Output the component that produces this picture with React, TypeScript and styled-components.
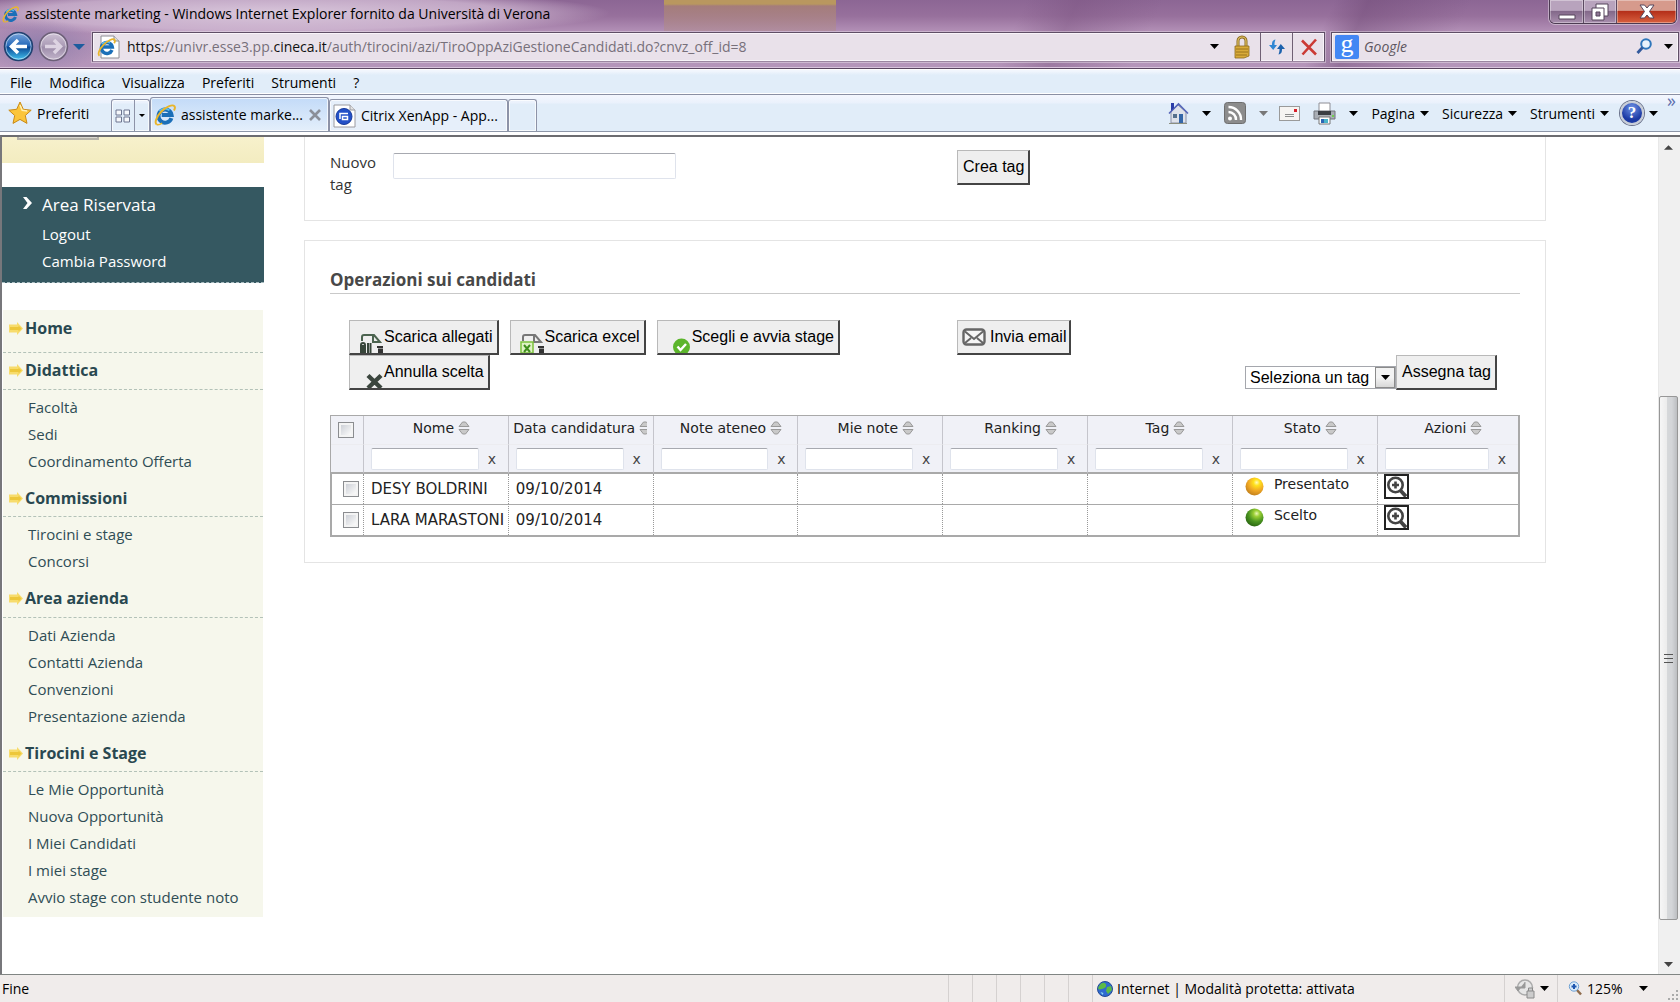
import React from "react";
import styled, { createGlobalStyle, css } from "styled-components";

const ui = `"Open Sans", "Noto Sans", sans-serif`;
const web = `"Open Sans", "Noto Sans", sans-serif`;
const grid = `"DejaVu Sans", sans-serif`;
const form = `"Liberation Sans", Arial, sans-serif`;

const GlobalStyle = createGlobalStyle`
  * { box-sizing: border-box; }
  body { margin: 0; background: #fff; font-family: ${ui}; font-size: 14px; color: #000; }
  button, input, select { font: inherit; color: inherit; margin: 0; }
  a { color: inherit; text-decoration: none; }
  svg { display: block; flex: none; }
`;

const Window = styled.div`
  display: flex;
  flex-direction: column;
  height: 100vh;
  overflow: hidden;
`;

/* ---------- glass frame ---------- */

const Glass = styled.header`
  border-bottom: 1px solid #5a4560;
  box-shadow: inset 0 -1px 0 #d9c3dc;
  background:
    radial-gradient(ellipse 60px 26px at 40px 46px, rgba(120, 115, 165, 0.6), transparent 100%),
    radial-gradient(ellipse 340px 24px at 270px 13px, rgba(224, 208, 226, 0.9), rgba(214, 192, 216, 0.7) 70%, transparent 100%),
    linear-gradient(180deg, #b9975f 0 4px, rgba(168, 128, 118, 0.85) 6px, rgba(176, 140, 150, 0.7) 31px) 664px 0 / 172px 31px no-repeat,
    linear-gradient(115deg, transparent 60%, rgba(120, 80, 125, 0.4) 63%, transparent 68%, transparent 78%, rgba(110, 72, 116, 0.45) 80%, transparent 86%),
    linear-gradient(180deg, #8c6694 0, #97709c 16px, #b08db4 30px, #b596ba 68px);
`;

const TitleBar = styled.div`
  display: flex;
  justify-content: space-between;
  height: 31px;
  padding: 0 3px 0 2px;
`;

const Title = styled.h1`
  display: flex;
  align-items: center;
  gap: 6px;
  height: 28px;
  margin: 0;
  font-size: 14px;
  line-height: 20px;
  font-weight: 400;
`;

const WindowControls = styled.div`
  display: flex;
  height: 24px;
  border: 1px solid #4c3b52;
  border-top: 0;
  border-radius: 0 0 6px 6px;
  overflow: hidden;
  box-shadow: 0 0 0 1px rgba(255, 255, 255, 0.4);
`;

const WindowButton = styled.button<{ $close?: boolean }>`
  display: flex;
  align-items: center;
  justify-content: center;
  width: ${(p) => (p.$close ? 60 : 33)}px;
  padding: 0;
  border: 0;
  border-left: 1px solid #5c4a62;
  background: ${(p) =>
    p.$close
      ? "linear-gradient(#d69a8c 0 45%, #b5301a 50%, #d8603f 100%)"
      : "linear-gradient(#b8a3bd 0 45%, #83698a 50%, #a98fae 100%)"};
  box-shadow: inset 0 0 0 1px rgba(255, 255, 255, 0.35);
  &:first-child { border-left: 0; }
`;

const NavRow = styled.div`
  display: flex;
  align-items: center;
  height: 37px;
  padding: 0 1px 6px 3px;
  gap: 6px;
`;

const NavButtons = styled.div`
  display: flex;
  align-items: center;
  gap: 4px;
  width: 83px;
  height: 30px;
`;

const BareButton = styled.button`
  display: flex;
  align-items: center;
  gap: 5px;
  padding: 0;
  border: 0;
  background: none;
  white-space: nowrap;
`;

const Field = styled.div`
  display: flex;
  align-items: center;
  height: 30px;
  border: 1px solid #5f4e66;
  border-bottom-color: #9b86a0;
  box-shadow: inset 0 0 0 1px #f9f4f9, 0 0 0 1px rgba(255, 255, 255, 0.35);
  background: #e9e1ea;
`;

const AddressField = styled(Field)`
  flex: 1;
  padding-left: 4px;
`;

const Url = styled.div`
  flex: 1;
  margin-left: 6px;
  line-height: 20px;
  color: #77707a;
  outline: 0;
  b { font-weight: 400; color: #111; }
`;

const FieldButton = styled.button<{ $rule?: boolean; $w: number }>`
  display: flex;
  align-items: center;
  justify-content: center;
  width: ${(p) => p.$w}px;
  height: 28px;
  padding: 0;
  border: 0;
  border-left: ${(p) => (p.$rule ? "1px solid #6f6074" : "0")};
  background: none;
`;

const SearchField = styled(Field)`
  width: 348px;
  padding-left: 3px;
`;

const GoogleMark = styled.span`
  width: 24px;
  height: 24px;
  border-radius: 2px;
  background: #4387f4;
  color: #fff;
  font: 26px/18px "Liberation Serif", serif;
  text-align: center;
`;

const SearchInput = styled.input`
  flex: 1;
  min-width: 0;
  padding: 0 5px;
  border: 0;
  outline: 0;
  background: none;
  &::placeholder { color: #5d5660; font-style: italic; opacity: 1; }
`;

/* ---------- bars ---------- */

const MenuBar = styled.nav`
  display: flex;
  align-items: center;
  gap: 17px;
  height: 26px;
  padding: 2px 10px 0;
  border-bottom: 1px solid #8a8fa3;
  box-shadow: inset 0 1px 0 #fff, inset 0 -1px 0 #fff;
  background: linear-gradient(#f2f6fd 0 2px, #e1edf9 6px);
`;

const CommandBar = styled.div`
  display: flex;
  justify-content: space-between;
  align-items: stretch;
  height: 37px;
  border-bottom: 1px solid #8d96a8;
  background: linear-gradient(#f4f7fe 0, #eaf1fc 8px, #e1edf9 9px);
`;

const Side = styled.div`
  display: flex;
  align-items: flex-end;
`;

const Favorites = styled(BareButton)`
  align-self: center;
  width: 103px;
  margin-left: 8px;
`;

const tabFace = css`
  border: 1px solid #8d93a8;
  border-bottom: 0;
  border-radius: 3px 3px 0 0;
  box-shadow: inset 0 0 0 1px rgba(255, 255, 255, 0.7);
`;

const QuickTabs = styled.div`
  ${tabFace}
  display: flex;
  width: 39px;
  height: 32px;
`;

const QuickButton = styled.button<{ $w: number }>`
  display: flex;
  align-items: center;
  justify-content: center;
  width: ${(p) => p.$w}px;
  padding: 0;
  border: 0;
  background: none;
  & + & { border-left: 1px solid #8d93a8; }
`;

const Tab = styled.div<{ $active?: boolean }>`
  ${tabFace}
  display: flex;
  align-items: center;
  justify-content: space-between;
  width: 179px;
  height: ${(p) => (p.$active ? 34 : 32)}px;
  padding: 0 7px 0 3px;
  background: ${(p) => (p.$active ? "linear-gradient(#c3dbf8, #e4effb)" : "#e6effa")};
`;

const NewTab = styled.button`
  ${tabFace}
  width: 29px;
  height: 32px;
  padding: 0;
  background: none;
`;

const Commands = styled.div`
  display: flex;
  align-items: center;
  padding-right: 4px;
`;

const Command = styled(BareButton)<{ $gap: number }>`
  margin-right: ${(p) => p.$gap}px;
`;

const HelpMark = styled.span`
  width: 24px;
  height: 24px;
  border: 2px solid #c9ced8;
  border-radius: 50%;
  box-shadow: 0 0 0 1px #69718a;
  background: radial-gradient(circle at 50% 25%, #6f93e6, #1c3aa4 65%);
  color: #fff;
  font: 700 17px/20px "Liberation Serif", serif;
  text-align: center;
`;

const Chevrons = styled.span`
  align-self: flex-start;
  width: 18px;
  text-align: right;
  color: #5d6fae;
  font-size: 18px;
  line-height: 10px;
`;

/* ---------- viewport ---------- */

const Viewport = styled.div`
  display: flex;
  flex: 1;
  min-height: 0;
  margin-top: 3px;
  border-top: 2px solid #6c6c70;
  border-left: 2px solid #77777b;
  overflow: hidden;
`;

const Page = styled.div`
  display: flex;
  align-items: flex-start;
  flex: 1;
  gap: 40px;
  padding-right: 112px;
  overflow: hidden;
  font-family: ${web};
`;

const Sidebar = styled.aside`
  width: 262px;
  flex: none;
`;

const YellowBox = styled.div`
  height: 26px;
  padding-left: 15px;
  background: linear-gradient(#f7f1cc, #f3ecc0);
`;

const CutButton = styled.div`
  width: 82px;
  height: 3px;
  border: 2px solid #b5b3aa;
  border-top: 0;
  background: #dcdad2;
`;

const Reserved = styled.section`
  margin: 24px 0 27px;
  padding: 4px 0 7px 20px;
  border-bottom: 1px dashed #a9bcc0;
  background: #355861;
  color: #fff;
`;

const ReservedTitle = styled.h2`
  display: flex;
  align-items: center;
  gap: 9px;
  margin: 0 0 3px;
  font-size: 17px;
  line-height: 27px;
  font-weight: 400;
`;

const List = styled.ul<{ $indent: number }>`
  margin: 0;
  padding: 0 0 0 ${(p) => p.$indent}px;
  list-style: none;
  font-size: 15px;
  line-height: 27px;
`;

const Menu = styled.nav`
  margin: 0 1px;
  padding-bottom: 6px;
  background: #f6f7ec;
  color: #2f4d55;
`;

const MenuHeading = styled.h2<{ $top: number; $bottom: number }>`
  display: flex;
  align-items: center;
  gap: 2px;
  margin: 0 0 4px;
  padding: ${(p) => p.$top}px 0 ${(p) => p.$bottom}px 6px;
  border-bottom: 1px dashed #b3c2b8;
  font-size: 16px;
  line-height: 27px;
  font-weight: 700;
  color: #294850;
  &:first-child { margin-bottom: 0; }
`;

const Main = styled.main`
  flex: 1;
  min-width: 0;
`;

const Panel = styled.section`
  padding: 0 25px 25px;
  border: 1px solid #e4e4e4;
  & + & { margin-top: 19px; padding-top: 25px; }
  &:first-child { border-top: 0; padding-top: 13px; }
`;

const Halves = styled.div`
  display: grid;
  grid-template-columns: 627fr 563fr;
`;

const NewTag = styled.div`
  display: flex;
  align-items: flex-start;
  padding-top: 1px;
`;

const NewTagLabel = styled.label`
  width: 63px;
  padding-right: 16px;
  font-size: 15px;
  line-height: 22px;
  color: #333;
`;

const inputFace = css`
  border: 1px solid #dfe3ec;
  border-top-color: #a7a9b0;
  border-radius: 2px;
  background: #fff;
  outline: 0;
`;

const NewTagInput = styled.input`
  ${inputFace}
  width: 283px;
  height: 26px;
  margin-top: 2px;
  padding: 0 5px;
`;

const PanelTitle = styled.h2`
  margin: 0 0 26px;
  border-bottom: 1px solid #c9c9c9;
  font-size: 17px;
  line-height: 27px;
  font-weight: 700;
  color: #484848;
`;

const FormButton = styled.button`
  display: flex;
  align-items: center;
  height: 35px;
  padding: 0 4px 0 5px;
  border: 2px solid #444;
  border-top: 1px solid #b9b9b9;
  border-left: 1px solid #b9b9b9;
  background: #efefef;
  font-family: ${form};
  font-size: 16px;
  white-space: nowrap;
  svg { align-self: flex-end; }
`;

const MailButton = styled(FormButton)`
  gap: 4px;
  padding: 0 3px 0 4px;
  svg { align-self: center; }
`;

const LeftOps = styled.div`
  display: flex;
  flex-wrap: wrap;
  align-content: flex-start;
  column-gap: 11px;
  padding-left: 19px;
`;

const RightOps = styled.div`
  display: flex;
  flex-direction: column;
  align-items: flex-start;
`;

const AssignRow = styled.div`
  display: flex;
  align-items: flex-end;
  align-self: flex-end;
  margin-right: 23px;
`;

const SelectBox = styled.div`
  position: relative;
  margin-bottom: 1px;
`;

const TagSelect = styled.select`
  appearance: none;
  display: block;
  width: 151px;
  height: 23px;
  padding: 0 22px 0 4px;
  border: 1px solid #a5a7ad;
  border-radius: 0;
  background: #fff;
  font-family: ${form};
  font-size: 16px;
`;

const SelectArrow = styled.span`
  position: absolute;
  top: 1px;
  right: 1px;
  display: flex;
  align-items: center;
  justify-content: center;
  width: 20px;
  height: 21px;
  border: 1px solid #8b8b8b;
  background: linear-gradient(#f3f3f3 50%, #d8d8d8);
  pointer-events: none;
`;

/* ---------- table ---------- */

const Table = styled.table`
  table-layout: fixed;
  width: 100%;
  margin-top: 25px;
  border-collapse: separate;
  border-spacing: 0;
  border: 1px solid #a9a9a9;
  border-right-width: 2px;
  border-bottom-width: 2px;
  font-family: ${grid};
  font-size: 14px;
  color: #222;
`;

const CheckCol = styled.col`
  width: 32px;
`;

const DataCol = styled.col`
  width: 12.2%;
  &:last-child { width: auto; }
`;

const Th = styled.th`
  height: 29px;
  padding: 0 0 4px;
  border-left: 1px solid #c5c5cc;
  border-bottom: 1px solid #ececf0;
  background: #f0f1f7;
  font-weight: 400;
  &:first-child { border-left: 0; }
`;

const HeadLabel = styled.div`
  display: flex;
  align-items: center;
  justify-content: center;
  gap: 4px;
  margin: 0 6px 0 5px;
  overflow: hidden;
  white-space: nowrap;
  &::before { content: ""; flex: 0 1 8px; }
`;

const FilterTh = styled(Th)`
  height: 29px;
  padding: 0 7px;
  border-bottom: 2px solid #a9a9a9;
`;

const FilterBox = styled.div`
  display: flex;
  align-items: center;
  gap: 6px;
`;

const FilterInput = styled.input`
  ${inputFace}
  flex: 1;
  min-width: 0;
  height: 22px;
  padding: 0 3px;
`;

const ClearButton = styled.button`
  width: 16px;
  height: 22px;
  padding: 0 4px 0 2px;
  border: 0;
  background: none;
  color: #444;
  line-height: 20px;
`;

const Td = styled.td<{ $top?: boolean }>`
  height: 30px;
  padding: 0 7px;
  border-left: 1px dotted #999;
  font-size: ${(p) => (p.$top ? 14 : 15)}px;
  vertical-align: ${(p) => (p.$top ? "top" : "middle")};
  white-space: nowrap;
  &:first-child { border-left: 1px solid #a9a9a9; padding: 0 0 0 11px; }
  tr + tr & { height: 31px; border-top: 1px solid #a9a9a9; }
`;

const Check = styled.input`
  appearance: none;
  display: block;
  width: 16px;
  height: 16px;
  border: 1px solid #8b8d90;
  background: linear-gradient(135deg, #c4c8d0, #f8f8f8 80%);
  box-shadow: inset 0 0 0 2px #f4f4f4;
`;

const HeadCheck = styled(Check)`
  margin: 4px 0 0 7px;
`;

const State = styled.div`
  display: flex;
  gap: 10px;
  padding-left: 5px;
  line-height: 20px;
  svg { margin-top: 3px; }
`;

const ZoomLink = styled.a`
  display: block;
  width: 25px;
  height: 25px;
  margin-left: -1px;
  border: 2px solid #222;
`;

/* ---------- scrollbar ---------- */

const ScrollBar = styled.div`
  display: flex;
  flex-direction: column;
  width: 22px;
  flex: none;
  padding-right: 2px;
  border-left: 1px solid #e8e8e8;
  background: #f0f0f0;
`;

const ScrollArrow = styled.button`
  display: flex;
  align-items: center;
  justify-content: center;
  height: 20px;
  padding: 0;
  border: 0;
  background: none;
`;

const Track = styled.div<{ $share: number }>`
  flex: ${(p) => p.$share};
`;

const Thumb = styled.div`
  display: flex;
  flex: 523;
  align-items: center;
  justify-content: center;
  border: 1px solid #979797;
  border-radius: 2px;
  background: linear-gradient(90deg, #f6f6f6, #ececec 40%, #d6d8da 41%, #d3d5d8 70%, #bcbec1);
`;

/* ---------- status ---------- */

const StatusBar = styled.footer`
  display: flex;
  align-items: stretch;
  height: 28px;
  flex: none;
  padding-left: 2px;
  border-top: 1px solid #808583;
  background: #f0eceb;
  line-height: 27px;
`;

const StatusText = styled.div`
  flex: 1;
`;

const Cell = styled.div<{ $w: number }>`
  display: flex;
  align-items: center;
  gap: 4px;
  width: ${(p) => p.$w}px;
  padding-left: 4px;
  border-left: 1px solid #d5d1d0;
  white-space: nowrap;
`;

const ToolCell = styled(Cell)`
  padding-left: 10px;
  gap: 16px;
`;

/* ---------- icons ---------- */

const Caret = ({ color = "#000", w = 9 }: { color?: string; w?: number }) => (
  <svg width={w} height={Math.ceil(w / 2)} viewBox="0 0 10 5" preserveAspectRatio="none">
    <path d="M0 0h10L5 5z" fill={color} />
  </svg>
);

const IELogo = ({ size = 20 }: { size?: number }) => (
  <svg width={size} height={size} viewBox="0 0 20 20">
    <path d="M15.8 12.9A6 6 0 1 1 16 10H7" fill="none" stroke="#1b6fb8" strokeWidth="3.6" />
    <path d="M5 6.6a6 6 0 0 1 9-.8" fill="none" stroke="#59bdec" strokeWidth="1.6" />
    <path d="M2.6 18.6C.4 17.6 1.6 12 6.5 7 11.5 2 17 .2 18.5 1.9c.8 1 .5 2.6-.4 4.1" fill="none" stroke="#e9b52b" strokeWidth="1.8" />
    <path d="M2.6 18.6c1.2.5 3-.1 4.8-1.3" fill="none" stroke="#e9b52b" strokeWidth="1.4" />
  </svg>
);

const PageIE = () => (
  <svg width="24" height="24" viewBox="0 0 24 24">
    <path d="M4 1h13l5 5v17H4z" fill="#fff" stroke="#8e8e95" />
    <path d="M17 1v5h5" fill="#ddd" stroke="#8e8e95" />
    <path d="M15 15a5.5 5.5 0 1 1 .3-3H6" fill="none" stroke="#1b6fb8" strokeWidth="3.4" />
    <path d="M5 9a6 6 0 0 1 8-1" fill="none" stroke="#59bdec" strokeWidth="1.4" />
    <path d="M2.5 20.8c-2-1.500-.5-6.500 4-11s9.500-6.600 11-5c.6.8.4 2.200-.3 3.400" fill="none" stroke="#e9b52b" strokeWidth="1.8" />
  </svg>
);

const CitrixIcon = () => (
  <svg width="23" height="24" viewBox="0 0 23 24">
    <path d="M1 1h16l5 5v17H1z" fill="#fff" stroke="#9a9aa0" />
    <path d="M17 1v5h5" fill="#e2e2e2" stroke="#9a9aa0" />
    <circle cx="11" cy="12.5" r="8" fill="#2350c8" stroke="#173a9b" />
    <path d="M7 15V9.500h8M9.500 12.500h5v3h-5z" fill="none" stroke="#fff" strokeWidth="1.5" />
  </svg>
);

const NavOrb = ({ forward }: { forward?: boolean }) => (
  <svg width="31" height="31" viewBox="0 0 31 31">
    <defs>
      <linearGradient id={forward ? "orbF" : "orbB"} x1="0" y1="0" x2="0" y2="1">
        <stop offset="0" stopColor={forward ? "#cfc3d6" : "#7ba6dc"} />
        <stop offset=".48" stopColor={forward ? "#aa9bb5" : "#2468b8"} />
        <stop offset=".52" stopColor={forward ? "#9c8ca9" : "#0b4692"} />
        <stop offset="1" stopColor={forward ? "#c4b6cc" : "#44c8f5"} />
      </linearGradient>
    </defs>
    <circle cx="15.5" cy="15.5" r="14" fill={`url(#${forward ? "orbF" : "orbB"})`} stroke={forward ? "#6d6078" : "#23416f"} strokeWidth="1.5" />
    <circle cx="15.5" cy="15.5" r="12.6" fill="none" stroke="#fff" strokeOpacity=".5" />
    <path
      d={forward ? "M7 15.500h15M16 9l6.500 6.500L16 22" : "M24 15.500H9M15 9l-6.500 6.500L15 22"}
      fill="none"
      stroke={forward ? "#ddd3e2" : "#fff"}
      strokeWidth="3.5"
    />
  </svg>
);

const Lock = () => (
  <svg width="16" height="24" viewBox="0 0 16 24">
    <path d="M4 12V6a4 4 0 0 1 8 0v6" fill="none" stroke="#8a6a1c" strokeWidth="3" />
    <path d="M4 12V6a4 4 0 0 1 8 0v6" fill="none" stroke="#e2c469" strokeWidth="1.2" />
    <path d="M1 11h14v10l-5 2H1z" fill="#d9ab3a" stroke="#8a6a1c" strokeWidth=".8" />
    <path d="M2 14h12M2 17h12M2 20h11" stroke="#9a741d" />
  </svg>
);

const Refresh = () => (
  <svg width="18" height="18" viewBox="0 0 18 18">
    <path d="M7.5 1.5C4.5 2 4 4 4 7H1l4.200 5L9 7H6.500c0-2 .2-3.500 1-5.500z" fill="#2f86d3" />
    <path d="M10.5 16.5c3-.5 3.500-2.500 3.500-5.500h3l-4.200-5L9 11h2.500c0 2-.2 3.500-1 5.500z" fill="#1c62ad" />
  </svg>
);

const StopX = () => (
  <svg width="18" height="18" viewBox="0 0 18 18">
    <path d="M2 2.500l14 14M16 1.500l-13.500 15" fill="none" stroke="#cb3a35" strokeWidth="2.6" />
  </svg>
);

const Magnifier = () => (
  <svg width="17" height="17" viewBox="0 0 17 17">
    <circle cx="10" cy="6" r="4.8" fill="#e9f2fb" stroke="#2f76bb" strokeWidth="2" />
    <path d="M6.500 9.500L1.500 15" stroke="#32599c" strokeWidth="2.8" />
  </svg>
);

const Star = () => (
  <svg width="24" height="24" viewBox="0 0 24 24">
    <path d="M12 1l3.300 7.300 7.900.9-5.900 5.300 1.700 7.900-7-4-7 4 1.700-7.900L.8 9.200l7.900-.9z" fill="#fbc53a" stroke="#c98a18" />
    <path d="M12 4l2.200 5.300 5 .6" fill="none" stroke="#fff0b5" strokeWidth="1.5" />
  </svg>
);

const FourPanes = () => (
  <svg width="16" height="14" viewBox="0 0 16 14">
    <path d="M1 1h5.500v5H1zM9 1h5.500v5H9zM1 8h5.500v5H1zM9 8h5.500v5H9z" fill="#f6f8fc" stroke="#6d7590" />
  </svg>
);

const House = () => (
  <svg width="21" height="22" viewBox="0 0 21 22">
    <path d="M3 10l7-7 8 7v11H3z" fill="#dfe2ea" stroke="#8b92a8" />
    <path d="M1 11.500L10.500 2 20 11.500" fill="none" stroke="#5565b8" strokeWidth="1.6" />
    <path d="M3 1h3v5l-3 3z" fill="#2b3da8" />
    <path d="M11 12h4v9h-4z" fill="#3567a8" />
    <path d="M5 12h4v4H5z" fill="#56708c" />
    <path d="M1 21.500h18" stroke="#8c8f80" />
  </svg>
);

const Feed = () => (
  <svg width="22" height="22" viewBox="0 0 22 22">
    <rect x=".5" y=".5" width="21" height="21" rx="3" fill="#8c8c8c" stroke="#6e6e6e" />
    <circle cx="6" cy="16.5" r="2" fill="#fff" />
    <path d="M4.500 10a7.500 7.500 0 0 1 7.500 8M4.500 5A12.500 12.500 0 0 1 17 18" fill="none" stroke="#fff" strokeWidth="2.4" />
  </svg>
);

const MailSmall = () => (
  <svg width="21" height="15" viewBox="0 0 21 15">
    <rect x=".5" y=".5" width="20" height="14" fill="#f6f4f2" stroke="#9a9a9a" />
    <rect x="15" y="3" width="3" height="3" fill="#d8202a" />
    <path d="M6 8.500h9M6 10.500h9" stroke="#8d8d8d" />
  </svg>
);

const Printer = () => (
  <svg width="23" height="23" viewBox="0 0 23 23">
    <path d="M6 1h11v9H6z" fill="#fff" stroke="#8e8e95" />
    <path d="M1 9h21v8H1z" fill="#a9aeb5" stroke="#70757d" />
    <path d="M5 9h13v4H5z" fill="#3a3e44" />
    <path d="M6 15h11v7H6z" fill="#fff" stroke="#777" />
    <path d="M8 17h3v4H8z" fill="#2b66b5" />
    <path d="M11 17h4v4h-4z" fill="#49b4c9" />
    <path d="M19 13h2v2h-2z" fill="#6fcf4f" />
  </svg>
);

const YellowArrow = () => (
  <svg width="14" height="13" viewBox="0 0 14 13">
    <path d="M0 2.500h8V0l6 6.500L8 13v-2.500H0z" fill="#f7dc6c" />
    <path d="M1 5h8.500V3.500l3 3-3 3V8H1z" fill="#edc73a" />
  </svg>
);

const ChevronRight = () => (
  <svg width="11" height="16" viewBox="0 0 11 16">
    <path d="M1 0h3.500l5.500 6-5.500 6H1l4.500-6z" fill="#fff" />
  </svg>
);

const PageBadge = ({ excel }: { excel?: boolean }) => (
  <svg width="29" height="20" viewBox="0 0 29 20">
    <path d="M7 8V4q0-2 2-2h10l6 7h-7V3" fill="none" stroke={excel ? "#777" : "#4c6450"} strokeWidth="2" />
    {excel ? (
      <>
        <path d="M5 9h12v11H5z" fill="#dff2c4" stroke="#7cc23c" strokeWidth="1.5" />
        <path d="M8 12l6 7M14 12l-6 7" stroke="#3f8f1c" strokeWidth="2" />
      </>
    ) : (
      <path d="M6 20v-8q0-2 2-2t2 2v8M8 12v8M13 10v10M15.500 10v10" fill="none" stroke="#37453a" strokeWidth="2" />
    )}
    <path d="M22 13h6v2h-6zM23 15.500h5V20h-5z" fill="#333" />
  </svg>
);

const GreenTick = () => (
  <svg width="29" height="15" viewBox="0 0 29 15">
    <circle cx="18.5" cy="9" r="8.5" fill="#5cb52c" />
    <path d="M14.500 8.500l3 3.500 5.500-6" fill="none" stroke="#fff" strokeWidth="2.4" />
  </svg>
);

const DarkX = () => (
  <svg width="29" height="15" viewBox="0 0 29 15">
    <path d="M13 2.500L26 15M26 2.500L13 15" stroke="#3b463e" strokeWidth="4.4" />
  </svg>
);

const Envelope = () => (
  <svg width="24" height="18" viewBox="0 0 24 18">
    <rect x="1.5" y="1.5" width="21" height="15" rx="3" fill="#f5f5f5" stroke="#666" strokeWidth="2.4" />
    <path d="M3 3.500l9 7.500 9-7.500M3 15l6-5M21 15l-6-5" fill="none" stroke="#666" strokeWidth="2" />
  </svg>
);

const SortIcon = () => (
  <svg width="12" height="14" viewBox="0 0 12 14">
    <path d="M1 5.500L4.500 1h3L11 5.500zM1 8.500h10L7.500 13h-3z" fill="#c9c9c9" stroke="#999" />
  </svg>
);

const Ball = ({ tone }: { tone: "yellow" | "green" }) => (
  <svg width="19" height="19" viewBox="0 0 19 19">
    <defs>
      <radialGradient id={tone} cx=".62" cy=".28" r=".7">
        <stop offset="0" stopColor={tone === "yellow" ? "#fffbc0" : "#e9f8b5"} />
        <stop offset=".25" stopColor={tone === "yellow" ? "#ffe21c" : "#9bcf35"} />
        <stop offset=".65" stopColor={tone === "yellow" ? "#f0a825" : "#4a9420"} />
        <stop offset="1" stopColor={tone === "yellow" ? "#c9861f" : "#2f6d14"} />
      </radialGradient>
    </defs>
    <circle cx="9.5" cy="9.5" r="9" fill={`url(#${tone})`} />
  </svg>
);

const ZoomPlus = () => (
  <svg width="21" height="21" viewBox="0 0 21 21">
    <circle cx="9.5" cy="9" r="7.2" fill="#fff" stroke="#444" strokeWidth="2.6" />
    <path d="M9.500 5.500v7M6 9h7" stroke="#444" strokeWidth="2.6" />
    <path d="M14.500 14.500L20 20.500" stroke="#444" strokeWidth="3.8" />
  </svg>
);

const Globe = () => (
  <svg width="16" height="16" viewBox="0 0 16 16">
    <circle cx="8" cy="8" r="7.5" fill="#2f6ad0" stroke="#244a93" />
    <path d="M4 2.500q4-2 5 1T5 8 1.500 6zM10 6l4-1 1 4-4 4-2-3z" fill="#5dbb46" />
    <path d="M3.500 11l3 1-1 2z" fill="#8fd8ee" />
  </svg>
);

const ProtectIcon = () => (
  <svg width="20" height="20" viewBox="0 0 20 20">
    <circle cx="10" cy="8.5" r="7.5" fill="#e6e6e6" stroke="#aaa" strokeWidth="1.5" />
    <path d="M10 3v6H5M0 8h6l-3 4z" fill="#999" stroke="#999" />
    <path d="M12 12h7v7h-7zM13.500 12V9h4v3" fill="#ccc" stroke="#8a8a8a" />
  </svg>
);

const StatusZoom = () => (
  <svg width="14" height="15" viewBox="0 0 14 15">
    <path d="M8.500 8.500L13 13.500" stroke="#8f6c4d" strokeWidth="2.5" />
    <circle cx="6" cy="5.5" r="4.7" fill="#d9ebfa" stroke="#6da0d3" />
    <path d="M6 3v5M3.500 5.500h5" stroke="#1e57b0" strokeWidth="2" />
  </svg>
);

/* ---------- data ---------- */

const sections = [
  { title: "Home", top: 5, bottom: 10, items: [] as string[] },
  { title: "Didattica", top: 4, bottom: 5, items: ["Facoltà", "Sedi", "Coordinamento Offerta"] },
  { title: "Commissioni", top: 10, bottom: 4, items: ["Tirocini e stage", "Concorsi"] },
  { title: "Area azienda", top: 10, bottom: 5, items: ["Dati Azienda", "Contatti Azienda", "Convenzioni", "Presentazione azienda"] },
  { title: "Tirocini e Stage", top: 10, bottom: 4, items: ["Le Mie Opportunità", "Nuova Opportunità", "I Miei Candidati", "I miei stage", "Avvio stage con studente noto"] },
];

const columns = ["Nome", "Data candidatura", "Note ateneo", "Mie note", "Ranking", "Tag", "Stato", "Azioni"];

const candidates = [
  { name: "DESY BOLDRINI", date: "09/10/2014", state: "Presentato", tone: "yellow" as const },
  { name: "LARA MARASTONI", date: "09/10/2014", state: "Scelto", tone: "green" as const },
];

const BrowserFrame = () => (
  <>
    <Glass>
      <TitleBar>
        <Title>
          <IELogo size={17} />
          assistente marketing - Windows Internet Explorer fornito da Università di Verona
        </Title>
        <WindowControls>
          <WindowButton aria-label="Riduci a icona">
            <svg width="18" height="18" viewBox="0 0 18 18"><path d="M1 12h16v4H1z" fill="#fff" stroke="#54455a" /></svg>
          </WindowButton>
          <WindowButton aria-label="Ripristina">
            <svg width="18" height="18" viewBox="0 0 18 18">
              <path d="M5 1h12v12H5z" fill="#fff" stroke="#54455a" />
              <path d="M1 5h12v12H1z" fill="#fff" stroke="#54455a" />
              <path d="M5 9h4v4H5z" fill="#8e7694" stroke="#54455a" />
            </svg>
          </WindowButton>
          <WindowButton $close aria-label="Chiudi">
            <svg width="16" height="15" viewBox="0 0 16 15">
              <path d="M1 1h4.500L8 4l2.500-3H15l-4.500 6.500L15 14h-4.500L8 11l-2.500 3H1l4.500-6.500z" fill="#fff" stroke="#54455a" />
            </svg>
          </WindowButton>
        </WindowControls>
      </TitleBar>
      <NavRow>
        <NavButtons>
          <BareButton aria-label="Indietro"><NavOrb /></BareButton>
          <BareButton aria-label="Avanti"><NavOrb forward /></BareButton>
          <BareButton aria-label="Pagine recenti"><Caret color="#1d5c9e" w={12} /></BareButton>
        </NavButtons>
        <AddressField>
          <PageIE />
          <Url role="textbox" aria-label="Indirizzo" contentEditable suppressContentEditableWarning spellCheck={false}>
            <b>https</b>://univr.esse3.pp.<b>cineca.it</b>/auth/tirocini/azi/TiroOppAziGestioneCandidati.do?cnvz_off_id=8
          </Url>
          <FieldButton $w={20} aria-label="Cronologia indirizzi"><Caret /></FieldButton>
          <FieldButton $w={36} aria-label="Certificato"><Lock /></FieldButton>
          <FieldButton $w={32} $rule aria-label="Aggiorna"><Refresh /></FieldButton>
          <FieldButton $w={32} $rule aria-label="Interrompi"><StopX /></FieldButton>
        </AddressField>
        <SearchField>
          <GoogleMark>g</GoogleMark>
          <SearchInput aria-label="Cerca" placeholder="Google" />
          <FieldButton $w={28} aria-label="Avvia ricerca"><Magnifier /></FieldButton>
          <FieldButton $w={20} aria-label="Motori di ricerca"><Caret /></FieldButton>
        </SearchField>
      </NavRow>
    </Glass>
    <MenuBar>
      {["File", "Modifica", "Visualizza", "Preferiti", "Strumenti", "?"].map((m) => (
        <BareButton key={m}>{m}</BareButton>
      ))}
    </MenuBar>
    <CommandBar>
      <Side>
        <Favorites><Star />Preferiti</Favorites>
        <QuickTabs>
          <QuickButton $w={22} aria-label="Schede veloci"><FourPanes /></QuickButton>
          <QuickButton $w={15} aria-label="Elenco schede"><Caret w={6} /></QuickButton>
        </QuickTabs>
        <Tab $active>
          <BareButton><IELogo size={22} />assistente marke...</BareButton>
          <BareButton aria-label="Chiudi scheda">
            <svg width="12" height="12" viewBox="0 0 12 12"><path d="M1 1l10 10M11 1L1 11" stroke="#8b8f99" strokeWidth="2.6" /></svg>
          </BareButton>
        </Tab>
        <Tab>
          <BareButton><CitrixIcon />Citrix XenApp - App...</BareButton>
        </Tab>
        <NewTab aria-label="Nuova scheda" />
      </Side>
      <Commands>
        <Command $gap={13} aria-label="Pagina iniziale"><House /></Command>
        <Command $gap={13} aria-label="Opzioni pagina iniziale"><Caret /></Command>
        <Command $gap={13} aria-label="Feed"><Feed /></Command>
        <Command $gap={11} aria-label="Opzioni feed"><Caret color="#777" /></Command>
        <Command $gap={13} aria-label="Leggi posta"><MailSmall /></Command>
        <Command $gap={13} aria-label="Stampa"><Printer /></Command>
        <Command $gap={13} aria-label="Opzioni stampa"><Caret /></Command>
        <Command $gap={13}>Pagina<Caret /></Command>
        <Command $gap={13}>Sicurezza<Caret /></Command>
        <Command $gap={11}>Strumenti<Caret /></Command>
        <Command $gap={0} aria-label="Guida"><HelpMark>?</HelpMark><Caret /></Command>
        <Chevrons>»</Chevrons>
      </Commands>
    </CommandBar>
  </>
);

const SideMenu = () => (
  <Sidebar>
    <YellowBox><CutButton /></YellowBox>
    <Reserved>
      <ReservedTitle><ChevronRight />Area Riservata</ReservedTitle>
      <List $indent={20}>
        <li><a href="#logout">Logout</a></li>
        <li><a href="#password">Cambia Password</a></li>
      </List>
    </Reserved>
    <Menu>
      {sections.map((s) => (
        <React.Fragment key={s.title}>
          <MenuHeading $top={s.top} $bottom={s.bottom}><YellowArrow />{s.title}</MenuHeading>
          {s.items.length > 0 && (
            <List $indent={25}>
              {s.items.map((i) => <li key={i}><a href="#voce">{i}</a></li>)}
            </List>
          )}
        </React.Fragment>
      ))}
    </Menu>
  </Sidebar>
);

const CandidateTable = () => (
  <Table>
    <colgroup>
      <CheckCol />
      {columns.map((c) => <DataCol key={c} />)}
    </colgroup>
    <thead>
      <tr>
        <Th><HeadCheck type="checkbox" aria-label="Seleziona tutti" /></Th>
        {columns.map((c) => (
          <Th key={c}><HeadLabel>{c}<SortIcon /></HeadLabel></Th>
        ))}
      </tr>
      <tr>
        <FilterTh />
        {columns.map((c) => (
          <FilterTh key={c}>
            <FilterBox>
              <FilterInput aria-label={`Filtra ${c}`} />
              <ClearButton aria-label={`Azzera ${c}`}>x</ClearButton>
            </FilterBox>
          </FilterTh>
        ))}
      </tr>
    </thead>
    <tbody>
      {candidates.map((c) => (
        <tr key={c.name}>
          <Td><Check type="checkbox" aria-label={`Seleziona ${c.name}`} /></Td>
          <Td>{c.name}</Td>
          <Td>{c.date}</Td>
          <Td /><Td /><Td /><Td />
          <Td $top><State><Ball tone={c.tone} />{c.state}</State></Td>
          <Td $top><ZoomLink href="#dettaglio" aria-label={`Dettaglio ${c.name}`}><ZoomPlus /></ZoomLink></Td>
        </tr>
      ))}
    </tbody>
  </Table>
);

export default function App() {
  return (
    <Window>
      <GlobalStyle />
      <BrowserFrame />
      <Viewport>
        <Page>
          <SideMenu />
          <Main>
            <Panel>
              <Halves>
                <NewTag>
                  <NewTagLabel htmlFor="nuovo-tag">Nuovo tag</NewTagLabel>
                  <NewTagInput id="nuovo-tag" />
                </NewTag>
                <RightOps><FormButton>Crea tag</FormButton></RightOps>
              </Halves>
            </Panel>
            <Panel>
              <PanelTitle>Operazioni sui candidati</PanelTitle>
              <Halves>
                <LeftOps>
                  <FormButton><PageBadge />Scarica allegati</FormButton>
                  <FormButton><PageBadge excel />Scarica excel</FormButton>
                  <FormButton><GreenTick />Scegli e avvia stage</FormButton>
                  <FormButton><DarkX />Annulla scelta</FormButton>
                </LeftOps>
                <RightOps>
                  <MailButton><Envelope />Invia email</MailButton>
                  <AssignRow>
                    <SelectBox>
                      <TagSelect aria-label="Tag da assegnare" defaultValue="">
                        <option value="">Seleziona un tag</option>
                      </TagSelect>
                      <SelectArrow><Caret /></SelectArrow>
                    </SelectBox>
                    <FormButton>Assegna tag</FormButton>
                  </AssignRow>
                </RightOps>
              </Halves>
              <CandidateTable />
            </Panel>
          </Main>
        </Page>
        <ScrollBar>
          <ScrollArrow aria-label="Scorri su">
            <svg width="9" height="5" viewBox="0 0 10 5"><path d="M0 5h10L5 0z" fill="#444" /></svg>
          </ScrollArrow>
          <Track $share={239} />
          <Thumb>
            <svg width="9" height="10" viewBox="0 0 9 10"><path d="M0 1.500h9M0 5.500h9M0 9.500h9" stroke="#555" /></svg>
          </Thumb>
          <Track $share={34} />
          <ScrollArrow aria-label="Scorri giù"><Caret color="#444" /></ScrollArrow>
        </ScrollBar>
      </Viewport>
      <StatusBar>
        <StatusText>Fine</StatusText>
        {[0, 1, 2, 3, 4, 5].map((n) => <Cell key={n} $w={24} />)}
        <Cell $w={412}><Globe />Internet | Modalità protetta: attivata</Cell>
        <ToolCell $w={53}>
          <BareButton aria-label="Modalità protetta"><ProtectIcon /><Caret /></BareButton>
        </ToolCell>
        <ToolCell $w={108}>
          <BareButton><StatusZoom />125%</BareButton>
          <BareButton aria-label="Livello di zoom"><Caret /></BareButton>
        </ToolCell>
        <svg width="15" height="27" viewBox="0 0 15 27">
          <path d="M11 15h2v2h-2zM11 19h2v2h-2zM7 19h2v2H7zM11 23h2v2h-2zM7 23h2v2H7zM3 23h2v2H3z" fill="#aaa" />
        </svg>
      </StatusBar>
    </Window>
  );
}
